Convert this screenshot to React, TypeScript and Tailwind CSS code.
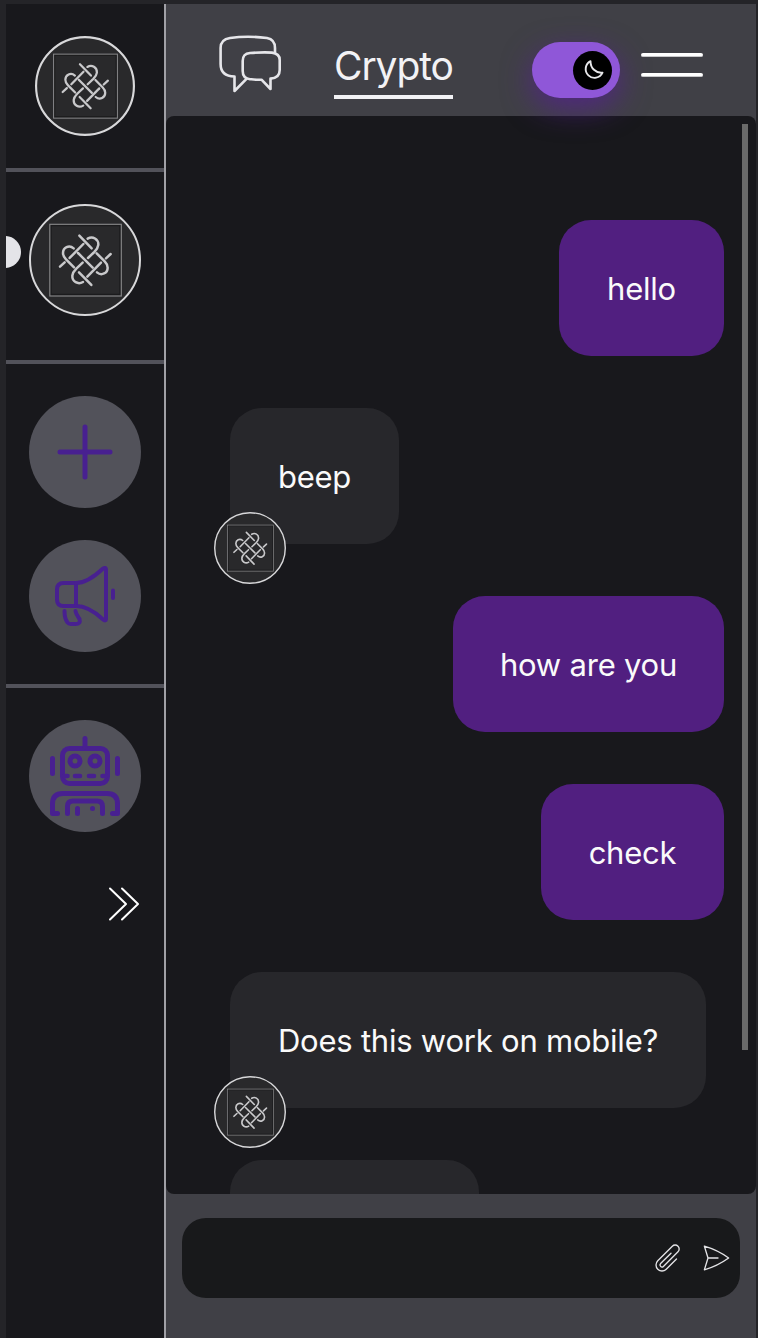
import React from "react";

function KnotHalf() {
  return (
    <>
      <path d="M76 20 L113 58" />
      <path d="M101 29 C116 20 134 30 133 48 C132 58 126 64 121 69 L102 87" />
      <path d="M88 45 L47 87" />
      <path d="M59 58 C45 46 27 56 27 72 C27 80 31 86 36 91 L60 115" />
      <path d="M32 100 L18 113" />
    </>
  );
}

function KnotAvatar({ className, ring }: { className: string; ring: number }) {
  return (
    <svg viewBox="0 0 112 112" className={className} fill="none">
      <circle cx="56" cy="56" r={56 - ring / 2} fill="#29292b" stroke="#d8d8da" strokeWidth={ring} />
      <rect x="21.500" y="21" width="70" height="70" stroke="#1b1b1d" strokeWidth="2.400" />
      <rect x="20.800" y="20.300" width="71.500" height="71.700" stroke="#858587" strokeWidth="1.200" />
      <g transform="translate(25 25) scale(0.3333)" stroke="#c9c9cb" strokeWidth="7.500" strokeLinecap="round" strokeLinejoin="round">
        <KnotHalf />
        <g transform="rotate(180 94 94)">
          <KnotHalf />
        </g>
        <path d="M72 72 L116 116" />
      </g>
    </svg>
  );
}

function PlusGlyph() {
  return (
    <svg viewBox="0 0 112 112" className="size-28" fill="none" stroke="#482090" strokeWidth="5" strokeLinecap="round">
      <path d="M56 31 V81 M31 56 H81" />
    </svg>
  );
}

function MegaphoneGlyph() {
  return (
    <svg viewBox="0 0 112 112" className="size-28" fill="none" stroke="#482090" strokeWidth="4" strokeLinecap="round" strokeLinejoin="round">
      <path d="M47 43 H34.500 Q28 43 28 49.500 V59.500 Q28 66 34.500 66 H47 Z" />
      <path d="M47 43 C57 43 66 36 73.500 29 Q77 26.500 77 30 V78.500 Q77 82 73.500 79 C66 72 57 66 47 66" />
      <path d="M84 50.500 V58" />
      <path d="M35.500 71 C35.500 76 36.500 80 38.500 82.500 Q39.500 84 42 84 H46.500 Q52 84 50.500 79 C49 76 47 74.500 46.500 71" />
    </svg>
  );
}

function RobotGlyph() {
  return (
    <svg viewBox="0 0 112 112" className="size-28" fill="none" stroke="#482090" strokeWidth="5" strokeLinecap="round" strokeLinejoin="round">
      <rect x="33.500" y="28.500" width="45" height="35" rx="7" />
      <path d="M56 18.500 V27 M23.500 38.500 V53.500 M88.500 38.500 V53.500" />
      <circle cx="46" cy="41" r="5" />
      <circle cx="66" cy="41" r="5" />
      <path d="M35 56 H38.500 M46 56 H51 M60 56 H65 M73.500 56 H77" strokeWidth="4.600" />
      <path d="M28.500 93.500 H23.500 V84 Q23.500 73.500 34 73.500 H78 Q88.500 73.500 88.500 84 V93.500 H83.500" />
      <path d="M38.500 93.500 V86.500 Q38.500 81 44 81 H68 Q73.500 81 73.500 86.500 V93.500" />
      <path d="M48.500 88.500 V93.500" />
      <path d="M63.500 88.500 V88.600" />
    </svg>
  );
}

function ChatGlyph() {
  return (
    <svg viewBox="0 0 64 60" className="h-[60px] w-16" fill="none" stroke="#e6e6ea" strokeWidth="2.600" strokeLinejoin="round" strokeLinecap="round">
      <path d="M57 18 V14 C57 8 54.500 5 49 4 C36 2.300 24 2.300 12 4 C5 5 2.600 9 2.600 14 V30 C2.600 38 7 42.300 16.500 42.500 V57 L28.500 44.800" />
      <path d="M32 19 C42 18.200 48 18.200 54 18.600 C60 19.300 61.700 22 61.700 26 V36 C61.700 41.500 58.500 44.300 52.500 44.600 V55 L43.500 45.700 C39 46 36 45.600 32 45.200 C27 44.600 24.700 42 24.700 37 V27 C24.700 22 26.500 19.500 32 19 Z" />
    </svg>
  );
}

function Bubble({ text, mine, className }: { text: string; mine?: boolean; className: string }) {
  return (
    <div className={mine ? "flex justify-end pr-8" : "flex pl-16"}>
      <div
        className={`relative flex h-[136px] items-center justify-center whitespace-nowrap rounded-[32px] text-[31px] tracking-[-0.22px] text-[#fafafa] ${
          mine ? "bg-[#511f80]" : "bg-[#27272b]"
        } ${className}`}
      >
        <span className="pt-0.5">{text}</span>
        {!mine && (
          <div className="absolute -left-4 top-[104px]">
            <KnotAvatar className="size-[72px]" ring={2.2} />
          </div>
        )}
      </div>
    </div>
  );
}

export default function App() {
  return (
    <div className="flex h-[1338px] w-[758px] overflow-hidden bg-[#242428] pl-1.5 pr-0.5 pt-1 font-['Inter','Liberation_Sans',sans-serif]">
      <aside className="flex w-40 shrink-0 flex-col overflow-hidden border-r-2 border-[#a0a0a6] bg-[#18181c]">
        <div className="flex h-[168px] shrink-0 justify-center border-b-4 border-[#52525a] pt-8">
          <KnotAvatar className="size-[100px]" ring={2.4} />
        </div>
        <div className="relative flex h-48 shrink-0 justify-center border-b-4 border-[#52525a] pt-8">
          <span className="absolute -left-[17px] top-16 size-8 rounded-full bg-[#e4e4e8]" />
          <KnotAvatar className="size-28" ring={2} />
        </div>
        <div className="flex h-[324px] shrink-0 flex-col items-center gap-8 border-b-4 border-[#52525a] pt-8">
          <button className="size-28 rounded-full bg-[#52525a]" aria-label="Add">
            <PlusGlyph />
          </button>
          <button className="size-28 rounded-full bg-[#52525a]" aria-label="Announcements">
            <MegaphoneGlyph />
          </button>
        </div>
        <div className="flex flex-col items-center pt-8">
          <button className="size-28 rounded-full bg-[#52525a]" aria-label="Bot">
            <RobotGlyph />
          </button>
        </div>
        <div className="flex justify-end pr-6 pt-[54px]">
          <svg viewBox="0 0 32 36" className="h-9 w-8" fill="none" stroke="#fff" strokeWidth="2" strokeLinecap="round" strokeLinejoin="round">
            <path d="M2 2.500 L18 18 L2 33.500 M14 2.500 L30 18 L14 33.500" />
          </svg>
        </div>
      </aside>

      <main className="flex grow flex-col bg-[#404046]">
        <header className="relative z-10 flex h-28 shrink-0 items-start pl-[52px]">
          <div className="pt-[30px]">
            <ChatGlyph />
          </div>
          <h1 className="ml-[52px] mt-9 h-[59px] w-[119px] whitespace-nowrap border-b-4 border-[#f2f2f5] text-[39px] leading-[52px] tracking-[-1.1px] text-[#f2f2f5]">
            Crypto
          </h1>
          <div className="ml-[79px] mt-[38px] flex h-14 w-[88px] items-center justify-end rounded-full bg-[#8f57d8] pr-2 shadow-[0_10px_30px_0_rgba(88,28,155,0.7)]">
            <div className="flex size-[39px] items-center justify-center rounded-full bg-black">
              <svg viewBox="0 0 24 24" className="size-6" fill="none" stroke="#e8e8ea" strokeWidth="1.900" strokeLinejoin="round">
                <path d="M9.500 3.200 A8.800 8.800 0 1 0 21.500 14.700 C15 15.500 9.300 10 9.500 3.200 Z" />
              </svg>
            </div>
          </div>
          <div className="ml-[21px] mt-[49px] flex flex-col gap-4">
            <span className="h-1 w-[62px] rounded-sm border-b border-[#c8c8ca] bg-white" />
            <span className="h-1 w-[62px] rounded-sm border-b border-[#c8c8ca] bg-white" />
          </div>
        </header>

        <section className="relative h-[1078px] shrink-0 overflow-hidden rounded-lg bg-[#18181c] pt-[104px]">
          <div className="flex flex-col gap-[52px]">
            <Bubble text="hello" mine className="w-[165px]" />
            <Bubble text="beep" className="w-[169px]" />
            <Bubble text="how are you" mine className="w-[271px]" />
            <Bubble text="check" mine className="w-[183px]" />
            <Bubble text="Does this work on mobile?" className="w-[476px]" />
            <Bubble text="" className="w-[249px]" />
          </div>
          <div className="absolute right-2 top-2 h-[926px] w-1.5 bg-[#6a6a6a]" />
        </section>

        <footer className="px-4 pt-6">
          <div className="flex h-20 items-center justify-end gap-4 rounded-3xl bg-[#18191b] pr-2 text-[#e4e4e7]">
            <svg viewBox="0 0 24 24" className="size-8" fill="none" stroke="currentColor" strokeWidth="1" strokeLinecap="round" strokeLinejoin="round">
              <path d="m18.375 12.739-7.693 7.693a4.500 4.500 0 0 1-6.364-6.364l10.940-10.940A3 3 0 1 1 19.500 7.372L8.552 18.320m.009-.010-.010.010m5.699-9.941-7.810 7.810a1.500 1.500 0 0 0 2.112 2.130" />
            </svg>
            <svg viewBox="0 0 24 24" className="size-8" fill="none" stroke="currentColor" strokeWidth="1" strokeLinecap="round" strokeLinejoin="round">
              <path d="M6 12 3.269 3.125A59.769 59.769 0 0 1 21.485 12 59.768 59.768 0 0 1 3.270 20.875L5.999 12Zm0 0h7.500" />
            </svg>
          </div>
        </footer>
      </main>
    </div>
  );
}
